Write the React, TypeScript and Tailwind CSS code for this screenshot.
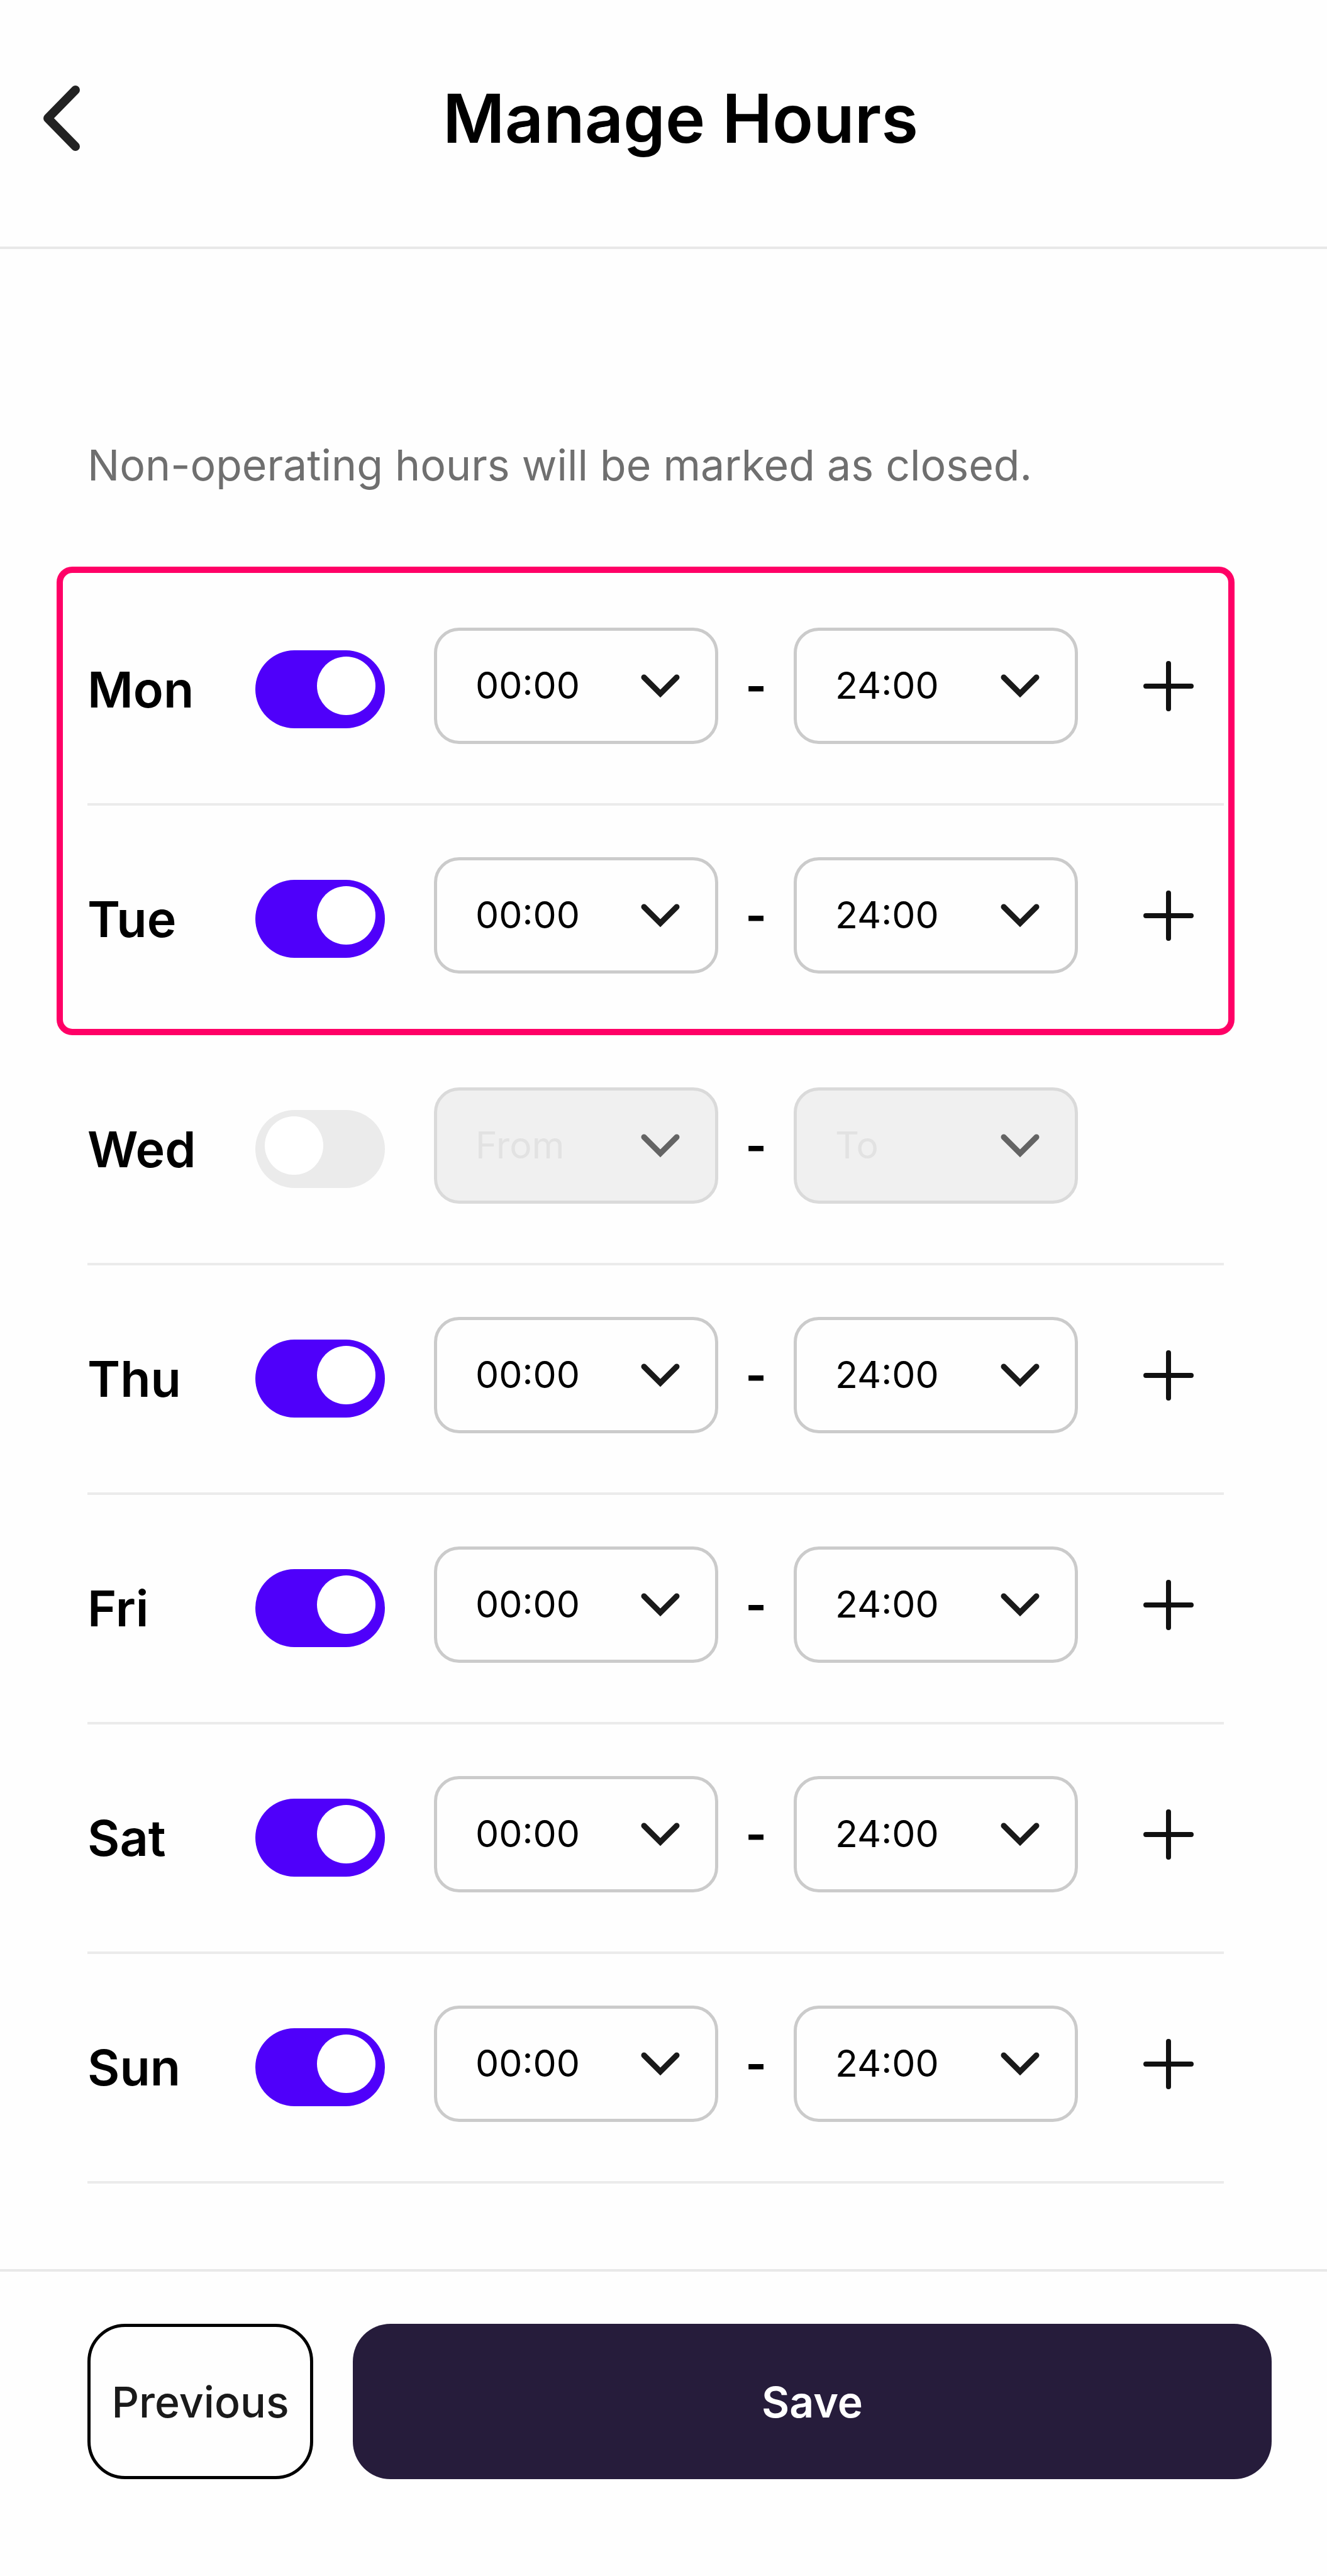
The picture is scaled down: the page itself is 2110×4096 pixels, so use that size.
import { useState } from "react";

// Type definitions
interface DayHours {
  day: string;
  open: boolean;
  from: string;
  to: string;
}

interface TimeSelectProps {
  label: string;
  placeholder: string;
  value: string;
  disabled: boolean;
  onChange: (value: string) => void;
}

interface DayRowProps {
  item: DayHours;
  onChange: (item: DayHours) => void;
}

const initialHours: DayHours[] = [
  { day: "Mon", open: true, from: "00:00", to: "24:00" },
  { day: "Tue", open: true, from: "00:00", to: "24:00" },
  { day: "Wed", open: false, from: "", to: "" },
  { day: "Thu", open: true, from: "00:00", to: "24:00" },
  { day: "Fri", open: true, from: "00:00", to: "24:00" },
  { day: "Sat", open: true, from: "00:00", to: "24:00" },
  { day: "Sun", open: true, from: "00:00", to: "24:00" },
];

// 00:00, 01:00 ... 24:00
const times = Array.from({ length: 25 }, (_, hour) => `${String(hour).padStart(2, "0")}:00`);

const TimeSelect = ({ label, placeholder, value, disabled, onChange }: TimeSelectProps) => (
  <div className="relative min-w-0 flex-1">
    <select
      aria-label={label}
      value={value}
      disabled={disabled}
      onChange={(e) => onChange(e.target.value)}
      className="block h-[185px] w-full appearance-none rounded-[40px] border-[5px] border-[#cbcbcb] bg-transparent pl-[61px] text-[59px] text-black disabled:border-[#dadada] disabled:bg-[#f0f0f0] disabled:text-[#e2e2e2] disabled:opacity-100"
    >
      <option value="" hidden>
        {placeholder}
      </option>
      {times.map((time) => (
        <option key={time} value={time}>
          {time}
        </option>
      ))}
    </select>
    <svg
      viewBox="0 0 64 40"
      fill="none"
      stroke={disabled ? "#646464" : "#1a1a1a"}
      strokeWidth="9"
      strokeLinecap="round"
      className="pointer-events-none absolute top-[73px] right-[60px] h-[40px] w-[64px]"
    >
      <path d="M6 6 L32 32 L58 6" />
    </svg>
  </div>
);

const DayRow = ({ item, onChange }: DayRowProps) => (
  <li className="flex items-center border-b-4 border-[#ebebeb] pt-[82px] pb-[84px]">
    <label htmlFor={item.day} className="w-[267px] text-[79px] leading-[100px] font-semibold">
      {item.day}
    </label>
    <input
      id={item.day}
      type="checkbox"
      checked={item.open}
      onChange={(e) => onChange({ ...item, open: e.target.checked })}
      className="mr-[78px] h-[124px] w-[206px] shrink-0 appearance-none rounded-full bg-[#ebebeb] before:mt-[10px] before:ml-[15px] before:block before:size-[93px] before:rounded-full before:bg-white checked:bg-[#4f00fa] checked:before:ml-[98px]"
    />
    <div className="flex min-w-0 flex-1 items-center pb-[10px]">
      <TimeSelect
        label={`${item.day} from`}
        placeholder="From"
        value={item.from}
        disabled={!item.open}
        onChange={(from) => onChange({ ...item, from })}
      />
      <span className="w-[120px] text-center text-[72px] leading-[80px] font-bold">-</span>
      <TimeSelect
        label={`${item.day} to`}
        placeholder="To"
        value={item.to}
        disabled={!item.open}
        onChange={(to) => onChange({ ...item, to })}
      />
      <div className="flex w-[232px] justify-end pr-[48px]">
        {item.open && (
          <button aria-label={`Add hours for ${item.day}`} className="size-[80px]">
            <svg viewBox="0 0 80 80" fill="none" stroke="#111111" strokeWidth="8" strokeLinecap="round">
              <path d="M40 4 V76 M4 40 H76" />
            </svg>
          </button>
        )}
      </div>
    </div>
  </li>
);

const App = () => {
  const [hours, setHours] = useState<DayHours[]>(initialHours);

  const updateDay = (next: DayHours) => {
    setHours((prev) => prev.map((item) => (item.day === next.day ? next : item)));
  };

  return (
    <div className="flex min-h-screen flex-col bg-[#fefefe] font-[Inter,sans-serif] text-black">
      <header className="flex h-[396px] items-center border-b-4 border-[#e8e8e8] pb-4 pl-[60px]">
        <button aria-label="Back" className="w-[76px]">
          <svg viewBox="0 0 76 120" fill="none" stroke="#222222" strokeWidth="14" strokeLinecap="round" strokeLinejoin="round">
            <path d="M60 15 L16 60 L60 105" />
          </svg>
        </button>
        <h1 className="flex-1 pr-[82px] text-center text-[107px] leading-[136px] font-semibold">Manage Hours</h1>
      </header>

      <main className="flex-1 pr-[164px] pl-[139px]">
        <p className="pt-[293px] pb-[127px] text-[68px] leading-[100px] text-[#6f6f6f]">
          Non-operating hours will be marked as closed.
        </p>

        {/* First two days are highlighted */}
        <ul className="relative">
          {hours.slice(0, 2).map((item) => (
            <DayRow key={item.day} item={item} onChange={updateDay} />
          ))}
          <li
            aria-hidden="true"
            className="pointer-events-none absolute -top-[15px] -right-[17px] bottom-0 -left-[49px] rounded-[25px] border-[10px] border-[#ff0066]"
          ></li>
        </ul>
        <ul className="pt-px">
          {hours.slice(2).map((item) => (
            <DayRow key={item.day} item={item} onChange={updateDay} />
          ))}
        </ul>
      </main>

      <footer className="flex gap-[63px] border-t-4 border-[#e8e8e8] pt-[83px] pr-[88px] pb-[154px] pl-[139px]">
        <button className="h-[247px] w-[359px] rounded-[60px] border-[5px] border-black text-[68px] font-medium text-[#1a1a1a]">
          Previous
        </button>
        <button className="h-[247px] flex-1 rounded-[60px] bg-[#261c3b] text-[68px] font-semibold text-white">
          Save
        </button>
      </footer>
    </div>
  );
};

export default App;
